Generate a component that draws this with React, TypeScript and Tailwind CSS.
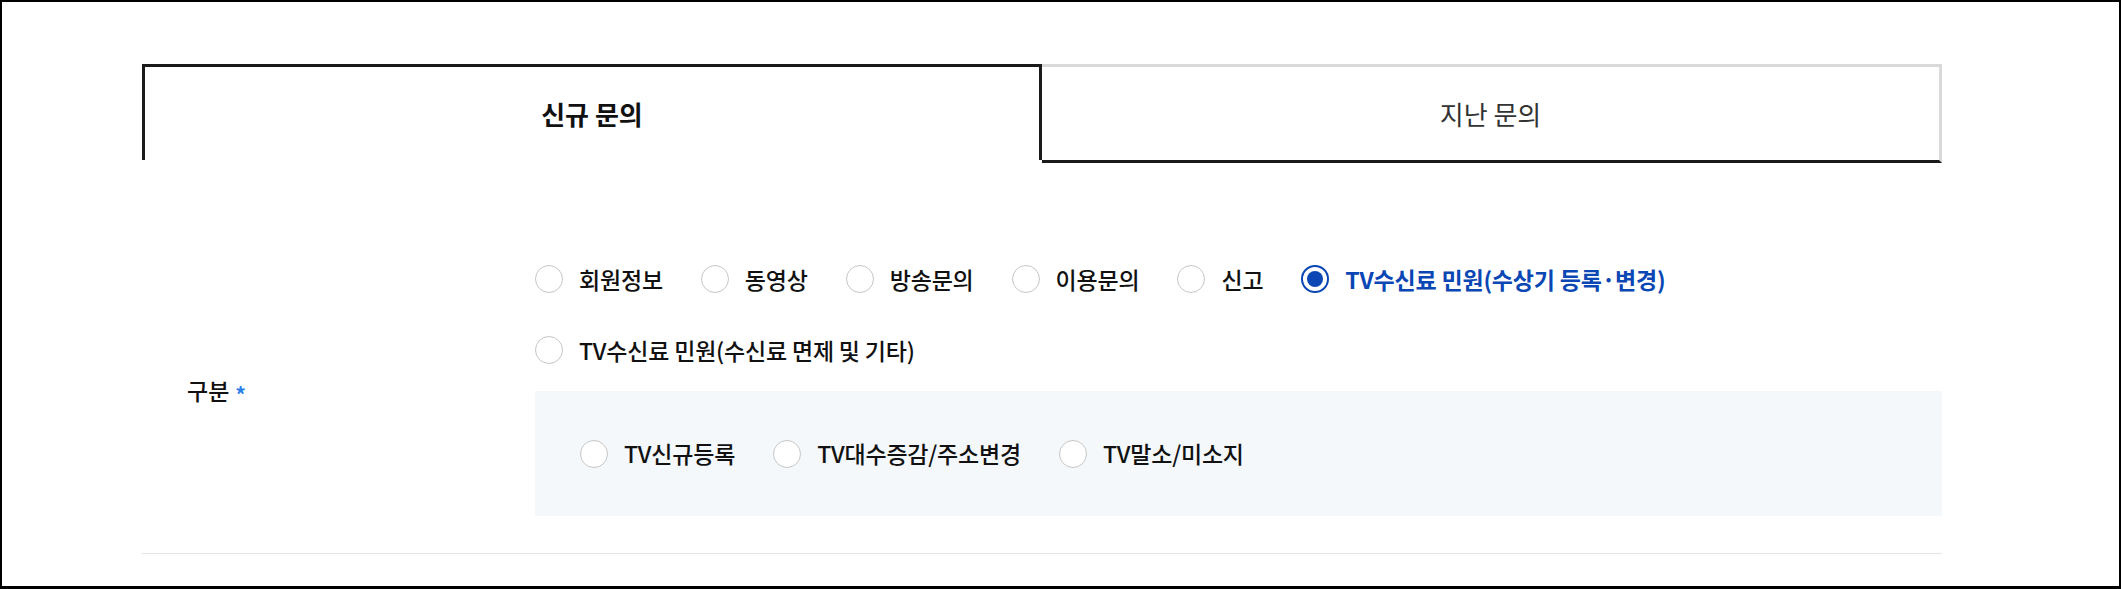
import { useState } from 'react';

const mainOptions = [
    '회원정보',
    '동영상',
    '방송문의',
    '이용문의',
    '신고',
    'TV수신료 민원(수상기 등록·변경)',
    'TV수신료 민원(수신료 면제 및 기타)',
];

const subOptions = ['TV신규등록', 'TV대수증감/주소변경', 'TV말소/미소지'];

function Radio({ label, checked, onClick }: { label: string; checked: boolean; onClick: () => void }) {
    return (
        <button type="button" onClick={onClick} className="flex items-center gap-[16px] h-[28px] cursor-pointer">
            {checked ? (
                <span className="w-[28px] h-[28px] rounded-full border-2 border-[#0a46b4] flex items-center justify-center bg-white">
                    <span className="w-[16px] h-[16px] rounded-full bg-[#0a46b4]" />
                </span>
            ) : (
                <span className="w-[28px] h-[28px] rounded-full border border-[#c6c6c6] bg-white" />
            )}
            <span
                className={
                    checked
                        ? 'text-[23px] leading-none tracking-[-0.2px] font-bold text-[#0a46b4] whitespace-nowrap'
                        : 'text-[23px] leading-none tracking-[-0.2px] font-medium text-[#111] whitespace-nowrap'
                }
            >
                {label}
            </span>
        </button>
    );
}

export default function App() {
    const [tab, setTab] = useState(0);
    const [main, setMain] = useState(5);
    const [sub, setSub] = useState(-1);

    return (
        <div className="w-full h-[589px] border-2 border-b-[3px] border-black bg-white font-['Noto_Sans_CJK_KR','Noto_Sans',sans-serif]">
            <div className="ml-[140px] w-[1800px] pt-[62px]">
                {/* tabs */}
                <div className="flex items-start">
                    <button
                        type="button"
                        onClick={() => setTab(0)}
                        className="w-[900px] h-[96px] border-[3px] border-b-0 border-[#1a1a1a] flex items-center justify-center"
                    >
                        <span className="text-[26px] font-bold text-[#111]">신규 문의</span>
                    </button>
                    <button
                        type="button"
                        onClick={() => setTab(1)}
                        className="w-[900px] h-[99px] border-t-[3px] border-r-[3px] border-b-[3px] border-t-[#d9d9d9] border-r-[#d9d9d9] border-b-[#1a1a1a] flex items-center justify-center"
                    >
                        <span className="text-[26px] font-normal text-[#333]">지난 문의</span>
                    </button>
                </div>

                {/* form row */}
                <div className="mt-[65px] flex border-b border-[#e5e5e5] py-[37px]">
                    <div className="w-[393px] pl-[45px] flex items-center">
                        <span className="text-[23px] font-medium text-[#111]">구분</span>
                        <span className="ml-[6px] mt-[7px] text-[21px] leading-none font-bold text-[#2b7de9]">*</span>
                    </div>
                    <div className="w-[1407px]">
                        <div className="flex flex-wrap gap-x-[38px] gap-y-[43px]">
                            {mainOptions.map((o, i) => (
                                <Radio key={o} label={o} checked={main === i} onClick={() => setMain(i)} />
                            ))}
                        </div>
                        <div className="mt-[27px] h-[125px] bg-[#f4f8fb] pl-[45px] flex items-center gap-x-[38px]">
                            {subOptions.map((o, i) => (
                                <Radio key={o} label={o} checked={sub === i} onClick={() => setSub(i)} />
                            ))}
                        </div>
                    </div>
                </div>
            </div>
            {tab === 1 && null}
        </div>
    );
}
